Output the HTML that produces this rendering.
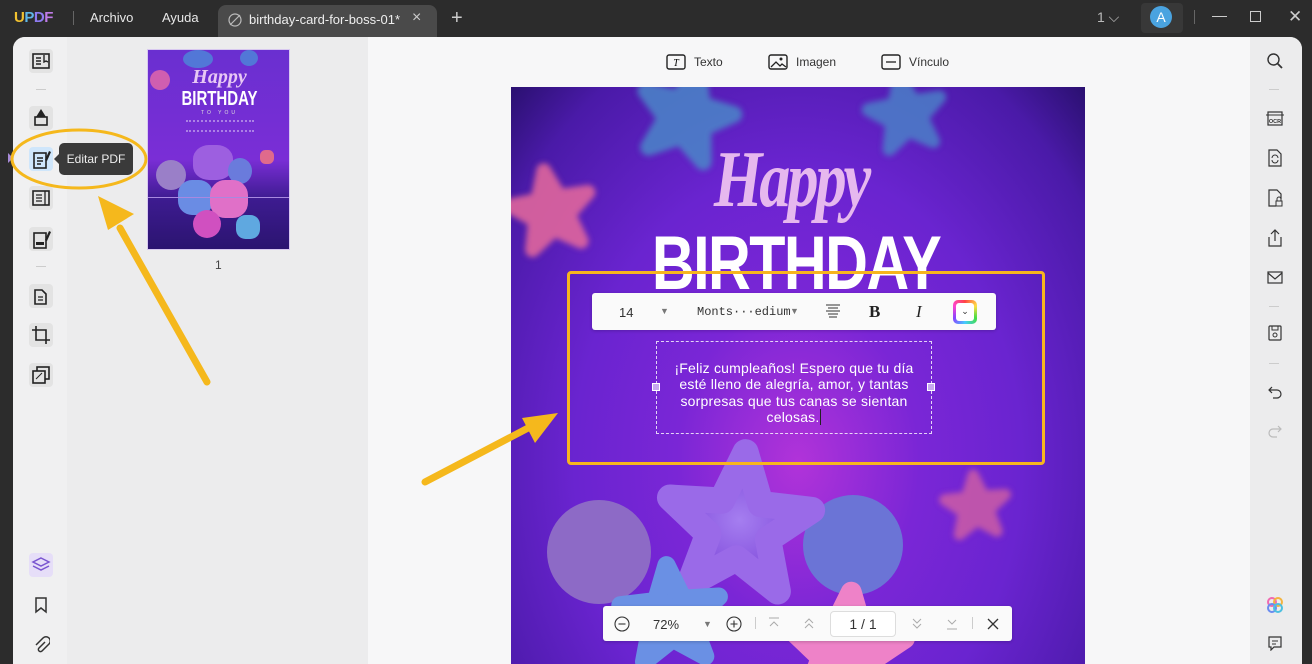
<!DOCTYPE html>
<html><head><meta charset="utf-8"><style>
*{margin:0;padding:0;box-sizing:border-box}
body{width:1312px;height:664px;overflow:hidden;background:#2c2c2c;font-family:"Liberation Sans",sans-serif;position:relative}
.a{position:absolute}
svg{display:block}
</style></head><body>
<!-- top bar -->
<div class="a" style="left:14px;top:9px;font-weight:bold;font-size:15px;letter-spacing:-0.5px"><span style="color:#f2c230">U</span><span style="color:#5fb7e8">P</span><span style="color:#8e7bf0">D</span><span style="color:#c07be8">F</span></div>
<div class="a" style="left:73px;top:11px;width:1px;height:14px;background:#666"></div>
<div class="a" style="left:90px;top:10px;color:#e8e8e8;font-size:13px">Archivo</div>
<div class="a" style="left:162px;top:10px;color:#e8e8e8;font-size:13px">Ayuda</div>
<div class="a" style="left:218px;top:5px;width:219px;height:33px;background:#4a4a4a;border-radius:8px 8px 0 0"></div>
<svg class="a" style="left:228px;top:13px" width="14" height="14"><circle cx="7" cy="7" r="6" fill="none" stroke="#bbb" stroke-width="1.2"/><line x1="2" y1="12" x2="12" y2="2" stroke="#bbb" stroke-width="1.2"/></svg>
<div class="a" style="left:249px;top:12px;color:#eee;font-size:13px">birthday-card-for-boss-01*</div>
<div class="a" style="left:412px;top:9px;color:#ccc;font-size:16px">×</div>
<div class="a" style="left:451px;top:7px;color:#ccc;font-size:20px">+</div>
<div class="a" style="left:1097px;top:9px;color:#bbb;font-size:14px">1 ⌵</div>
<div class="a" style="left:1141px;top:3px;width:42px;height:30px;background:#383838;border-radius:4px"></div>
<div class="a" style="left:1150px;top:6px;width:22px;height:22px;border-radius:50%;background:#4aa3e0;color:#fff;font-size:14px;text-align:center;line-height:22px">A</div>
<div class="a" style="left:1194px;top:10px;width:1px;height:14px;background:#666"></div>
<div class="a" style="left:1212px;top:16px;width:15px;height:1px;background:#ccc"></div>
<div class="a" style="left:1250px;top:11px;width:11px;height:11px;border:1px solid #ccc"></div>
<div class="a" style="left:1288px;top:7px;color:#ccc;font-size:17px">✕</div>

<!-- main panel -->
<div class="a" style="left:13px;top:37px;width:1289px;height:627px;background:#f7f7f8;border-radius:12px 12px 0 0;overflow:hidden">
 <div class="a" style="left:0;top:0;width:54px;height:627px;background:#f0f0f1"></div>
 <div class="a" style="left:54px;top:0;width:301px;height:627px;background:#ececed"></div>
 <div class="a" style="right:0;top:0;width:52px;height:627px;background:#ececed"></div>
</div>
<!-- left icons -->
<div class="a" style="left:29px;top:49px;width:24px;height:24px;background:#e3e3e3;border-radius:4px"></div>
<svg class="a" style="left:31px;top:51px" width="20" height="20"><rect x="2" y="3" width="16" height="14" fill="none" stroke="#222" stroke-width="1.6"/><path d="M5 7h5M5 10h5M5 13h5M13 4v7l2-1 2 1" stroke="#222" stroke-width="1.4" fill="none"/></svg>
<div class="a" style="left:36px;top:89px;width:10px;height:1px;background:#ccc"></div>
<div class="a" style="left:29px;top:106px;width:24px;height:24px;background:#e3e3e3;border-radius:4px"></div>
<svg class="a" style="left:31px;top:108px" width="20" height="22"><path d="M10 1L15 9H5Z" fill="#222"/><rect x="4" y="9" width="12" height="8" fill="none" stroke="#222" stroke-width="1.6"/></svg>
<div class="a" style="left:29px;top:147px;width:24px;height:24px;background:#cfe6fb;border-radius:4px"></div>
<svg class="a" style="left:31px;top:149px" width="22" height="22"><rect x="3" y="4" width="12" height="15" fill="none" stroke="#222" stroke-width="1.6"/><path d="M6 9h6M6 12h6M6 15h4" stroke="#222" stroke-width="1.4"/><path d="M18 2l2 1-4 9-2-1z" fill="#222"/></svg>
<div class="a" style="left:8px;top:153px;width:0;height:0;border-top:5px solid transparent;border-bottom:5px solid transparent;border-left:5px solid #a78ad8"></div>
<div class="a" style="left:59px;top:143px;width:74px;height:32px;background:#3a3a3a;border-radius:5px;color:#eee;font-size:12px;line-height:32px;text-align:center">Editar PDF</div>
<div class="a" style="left:54px;top:154px;border-top:5px solid transparent;border-bottom:5px solid transparent;border-right:5px solid #3a3a3a"></div>
<div class="a" style="left:29px;top:186px;width:24px;height:24px;background:#e3e3e3;border-radius:4px"></div>
<svg class="a" style="left:31px;top:188px" width="20" height="20"><rect x="2" y="3" width="16" height="14" fill="none" stroke="#222" stroke-width="1.6"/><path d="M5 7h6M5 10h6M5 13h6M14 3v14" stroke="#222" stroke-width="1.3"/></svg>
<div class="a" style="left:29px;top:227px;width:24px;height:24px;background:#e3e3e3;border-radius:4px"></div>
<svg class="a" style="left:31px;top:229px" width="22" height="22"><rect x="3" y="4" width="12" height="15" fill="none" stroke="#222" stroke-width="1.6"/><rect x="5" y="13" width="8" height="3" fill="#222"/><path d="M18 2l2 1-4 9-2-1z" fill="#222"/></svg>
<div class="a" style="left:36px;top:266px;width:10px;height:1px;background:#ccc"></div>
<div class="a" style="left:29px;top:284px;width:24px;height:24px;background:#e3e3e3;border-radius:4px"></div>
<svg class="a" style="left:31px;top:286px" width="20" height="20"><path d="M4 4h7l4 4v10H4z" fill="none" stroke="#222" stroke-width="1.6"/><path d="M7 11h5M7 14h5" stroke="#222" stroke-width="1.3"/></svg>
<div class="a" style="left:29px;top:323px;width:24px;height:24px;background:#e3e3e3;border-radius:4px"></div>
<svg class="a" style="left:31px;top:325px" width="20" height="20"><path d="M5 1v14h14M1 5h14v14" fill="none" stroke="#222" stroke-width="1.6"/></svg>
<div class="a" style="left:29px;top:363px;width:24px;height:24px;background:#e3e3e3;border-radius:4px"></div>
<svg class="a" style="left:31px;top:365px" width="20" height="20"><rect x="6" y="2" width="12" height="12" fill="none" stroke="#222" stroke-width="1.6"/><rect x="2" y="6" width="12" height="12" fill="#e3e3e3" stroke="#222" stroke-width="1.6"/><path d="M5 14l6-6" stroke="#222"/></svg>
<div class="a" style="left:29px;top:553px;width:24px;height:24px;background:#e6def8;border-radius:4px"></div>
<svg class="a" style="left:31px;top:555px" width="20" height="20"><path d="M10 3l8 4-8 4-8-4z M2 11l8 4 8-4" fill="none" stroke="#7a55d0" stroke-width="1.5"/></svg>
<svg class="a" style="left:33px;top:596px" width="16" height="18"><path d="M3 2h10v14l-5-4-5 4z" fill="none" stroke="#333" stroke-width="1.5"/></svg>
<svg class="a" style="left:32px;top:635px" width="18" height="20"><path d="M13 7l-6 6a2 2 0 0 0 3 3l7-7a4 4 0 0 0-6-6l-7 7" fill="none" stroke="#333" stroke-width="1.5"/></svg>

<!-- thumbnail -->
<div class="a" style="left:147px;top:49px;width:143px;height:201px;overflow:hidden;border:1px solid #d8c8f0;background:linear-gradient(180deg,#6a2fd0 0%,#7a2ed6 55%,#3d1b90 75%,#2b1470 100%)">
 <div class="a" style="left:2px;top:20px;width:20px;height:20px;background:#e86aa8;border-radius:50%;opacity:.8"></div>
 <div class="a" style="left:35px;top:0;width:30px;height:18px;background:#4c8ad8;border-radius:50%;opacity:.8"></div>
 <div class="a" style="left:92px;top:0;width:18px;height:16px;background:#4c8ad8;border-radius:50%;opacity:.8"></div>
 <div class="a" style="left:0;top:16px;width:143px;text-align:center;color:#e8c8f4;font-style:italic;font-weight:bold;font-size:20px;font-family:'Liberation Serif',serif">Happy</div>
 <div class="a" style="left:0;top:38px;width:143px;text-align:center;color:#fff;font-weight:bold;font-size:20px;transform:scaleX(.75)">BIRTHDAY</div>
 <div class="a" style="left:0;top:60px;width:143px;text-align:center;color:#ddd;font-size:5px;letter-spacing:3px">TO YOU</div>
 <div class="a" style="left:38px;top:70px;width:68px;height:12px;border-top:2px dotted rgba(255,255,255,.4);border-bottom:2px dotted rgba(255,255,255,.4)"></div>
 <div class="a" style="left:8px;top:110px;width:30px;height:30px;border-radius:50%;background:#9a7fc8"></div>
 <div class="a" style="left:45px;top:95px;width:40px;height:35px;border-radius:40%;background:#9d5fe0"></div>
 <div class="a" style="left:80px;top:108px;width:24px;height:26px;border-radius:50%;background:#6a7bdc"></div>
 <div class="a" style="left:30px;top:130px;width:35px;height:35px;border-radius:40%;background:#6a8ce4"></div>
 <div class="a" style="left:62px;top:130px;width:38px;height:38px;border-radius:40%;background:#e070c8"></div>
 <div class="a" style="left:45px;top:160px;width:28px;height:28px;border-radius:50%;background:#d050c0"></div>
 <div class="a" style="left:88px;top:165px;width:24px;height:24px;border-radius:40%;background:#5fa8e0"></div>
 <div class="a" style="left:112px;top:100px;width:14px;height:14px;border-radius:40%;background:#e06a8c"></div>
 <div class="a" style="left:0;top:147px;width:143px;height:1px;background:#a888e0"></div>
</div>
<div class="a" style="left:215px;top:258px;font-size:12px;color:#444">1</div>

<!-- top tool row -->
<svg class="a" style="left:666px;top:53px" width="20" height="18"><rect x="1" y="2" width="18" height="14" rx="2" fill="none" stroke="#222" stroke-width="1.4"/><text x="10" y="13" font-size="10" font-style="italic" text-anchor="middle" font-family="Liberation Serif">T</text></svg>
<div class="a" style="left:694px;top:55px;font-size:12px;color:#333">Texto</div>
<svg class="a" style="left:768px;top:53px" width="20" height="18"><rect x="1" y="2" width="18" height="14" rx="2" fill="none" stroke="#222" stroke-width="1.4"/><path d="M3 14l5-5 4 4 2-2 4 3" fill="none" stroke="#222" stroke-width="1.3"/><circle cx="13" cy="6" r="1.5" fill="#222"/></svg>
<div class="a" style="left:796px;top:55px;font-size:12px;color:#333">Imagen</div>
<svg class="a" style="left:881px;top:53px" width="20" height="18"><rect x="1" y="2" width="18" height="14" rx="2" fill="none" stroke="#222" stroke-width="1.4"/><path d="M5 9h10" stroke="#222" stroke-width="1.3"/></svg>
<div class="a" style="left:909px;top:55px;font-size:12px;color:#333">Vínculo</div>

<!-- page -->
<div class="a" style="left:511px;top:87px;width:574px;height:577px;overflow:hidden;background:radial-gradient(ellipse at 50% 65%,#b133d9 0%,#7a26d6 30%,#6a24d0 55%,#4a1aa8 85%,#2a1070 100%)">
<svg width="574" height="577">
<defs><polygon id="s" points="0,-1 0.26,-0.33 0.95,-0.31 0.4,0.13 0.59,0.81 0,0.42 -0.59,0.81 -0.4,0.13 -0.95,-0.31 -0.26,-0.33" stroke-linejoin="round" stroke-width="0.35"/>
<radialGradient id="pk"><stop offset="0" stop-color="#f8b0d0"/><stop offset="1" stop-color="#e0507e"/></radialGradient>
<radialGradient id="bl"><stop offset="0" stop-color="#6ab0e0"/><stop offset="1" stop-color="#3a6cb8"/></radialGradient>
<radialGradient id="pu"><stop offset="0" stop-color="#a57ef0"/><stop offset="1" stop-color="#7c44d8"/></radialGradient>
<filter id="bf"><feGaussianBlur stdDeviation="3"/></filter>
</defs>
<g filter="url(#bf)">
<use href="#s" fill="#4a86c8" stroke="#4a86c8" transform="translate(175,30) scale(48) rotate(15)" opacity=".85"/>
<use href="#s" fill="#4a86c8" stroke="#4a86c8" transform="translate(395,28) scale(38) rotate(-10)" opacity=".8"/>
<use href="#s" fill="#e86a9c" stroke="#e86a9c" transform="translate(40,125) scale(42) rotate(-10)" opacity=".85"/>
<use href="#s" fill="#e06a9c" stroke="#e06a9c" transform="translate(465,420) scale(32) rotate(-5)" opacity=".7"/>
</g>
<circle cx="88" cy="465" r="52" fill="#8d6ac6"/>
<circle cx="342" cy="458" r="50" fill="#6b74d6"/>
<use href="#s" fill="url(#pu)" stroke="#9a6ae8" transform="translate(228,440) scale(75) rotate(5)"/>
<use href="#s" fill="#6a90e4" stroke="#6a90e4" transform="translate(160,530) scale(52) rotate(-5)"/>
<use href="#s" fill="#ee82c8" stroke="#ee82c8" transform="translate(335,565) scale(60) rotate(5)"/>
</svg>
<div class="a" style="left:130px;top:48px;width:300px;text-align:center;color:#e6b8ee;font-family:'Liberation Serif',serif;font-style:italic;font-weight:bold;font-size:80px;line-height:90px;letter-spacing:-4px;transform:scaleX(.78)">Happy</div>
<div class="a" style="left:90px;top:142px;width:390px;text-align:center;color:#fff;font-weight:bold;font-size:76px;line-height:70px;letter-spacing:-2px;transform:scaleX(.78)">BIRTHDAY</div>
</div>

<!-- orange selection -->
<div class="a" style="left:567px;top:271px;width:478px;height:194px;border:3px solid #f7b51e;border-radius:4px"></div>
<!-- text toolbar -->
<div class="a" style="left:592px;top:293px;width:404px;height:37px;background:#fafafa;border-radius:3px;box-shadow:0 1px 3px rgba(0,0,0,.2)"></div>
<div class="a" style="left:619px;top:305px;font-size:13px;color:#333">14</div>
<div class="a" style="left:660px;top:306px;font-size:9px;color:#777">▼</div>
<div class="a" style="left:697px;top:305px;font-size:12px;color:#333;font-family:'Liberation Mono',monospace">Monts···edium</div>
<div class="a" style="left:790px;top:306px;font-size:9px;color:#777">▼</div>
<svg class="a" style="left:825px;top:303px" width="16" height="16"><path d="M1 2h14M3 5h10M1 8h14M3 11h10M4 14h8" stroke="#333" stroke-width="1.1"/></svg>
<div class="a" style="left:869px;top:302px;font-size:17px;font-weight:bold;font-family:'Liberation Serif',serif;color:#222">B</div>
<div class="a" style="left:916px;top:302px;font-size:17px;font-style:italic;font-family:'Liberation Serif',serif;color:#222">I</div>
<div class="a" style="left:953px;top:300px;width:24px;height:24px;border-radius:5px;background:conic-gradient(#f44,#fd4,#4d4,#4cf,#84f,#f4c,#f44);padding:3px"><div style="width:18px;height:18px;background:#fff;border-radius:3px;font-size:9px;text-align:center;line-height:16px;color:#333">⌄</div></div>
<!-- text box -->
<div class="a" style="left:656px;top:341px;width:276px;height:93px;border:1px dashed rgba(255,255,255,.8)"></div>
<div class="a" style="left:652px;top:383px;width:8px;height:8px;background:#c8a8f0;border:1px solid #fff"></div>
<div class="a" style="left:927px;top:383px;width:8px;height:8px;background:#c8a8f0;border:1px solid #fff"></div>
<div class="a" style="left:656px;top:360px;width:276px;text-align:center;color:#fff;font-size:14px;line-height:16.4px;white-space:nowrap;letter-spacing:0.2px">¡Feliz cumpleaños! Espero que tu día<br>esté lleno de alegría, amor, y tantas<br>sorpresas que tus canas se sientan<br>celosas.<span style="border-left:1px solid #222;margin-left:1px"></span></div>

<!-- zoom bar -->
<div class="a" style="left:603px;top:606px;width:409px;height:35px;background:#fafafa;border-radius:3px;box-shadow:0 1px 3px rgba(0,0,0,.2)"></div>
<svg class="a" style="left:614px;top:616px" width="16" height="16"><circle cx="8" cy="8" r="7" fill="none" stroke="#333" stroke-width="1.1"/><path d="M4.5 8h7" stroke="#333" stroke-width="1.1"/></svg>
<div class="a" style="left:653px;top:617px;font-size:13px;color:#333">72%</div>
<div class="a" style="left:703px;top:619px;font-size:9px;color:#777">▼</div>
<svg class="a" style="left:726px;top:616px" width="16" height="16"><circle cx="8" cy="8" r="7" fill="none" stroke="#333" stroke-width="1.1"/><path d="M4.5 8h7M8 4.5v7" stroke="#333" stroke-width="1.1"/></svg>
<div class="a" style="left:755px;top:617px;width:1px;height:12px;background:#ccc"></div>
<svg class="a" style="left:767px;top:616px" width="14" height="14"><path d="M2 2h10M3 10l4-4 4 4" fill="none" stroke="#aaa"/></svg>
<svg class="a" style="left:802px;top:616px" width="14" height="14"><path d="M3 7l4-4 4 4M3 12l4-4 4 4" fill="none" stroke="#aaa"/></svg>
<div class="a" style="left:830px;top:611px;width:66px;height:26px;border:1px solid #ddd;border-radius:4px;background:#fff;font-size:14px;color:#333;text-align:center;line-height:24px">1 / 1</div>
<svg class="a" style="left:910px;top:617px" width="14" height="14"><path d="M3 2l4 4 4-4M3 7l4 4 4-4" fill="none" stroke="#aaa"/></svg>
<svg class="a" style="left:945px;top:617px" width="14" height="14"><path d="M3 3l4 4 4-4M2 12h10" fill="none" stroke="#aaa"/></svg>
<div class="a" style="left:972px;top:617px;width:1px;height:12px;background:#ccc"></div>
<svg class="a" style="left:986px;top:617px" width="14" height="14"><path d="M2 2l10 10M12 2L2 12" stroke="#333" stroke-width="1.3"/></svg>

<!-- right sidebar icons -->
<svg class="a" style="left:1266px;top:52px" width="18" height="18"><circle cx="7.5" cy="7.5" r="5.5" fill="none" stroke="#333" stroke-width="1.4"/><path d="M11.5 11.5l4.5 4.5" stroke="#333" stroke-width="1.8"/></svg>
<div class="a" style="left:1269px;top:89px;width:10px;height:1px;background:#ccc"></div>
<svg class="a" style="left:1266px;top:109px" width="18" height="18"><rect x="2" y="3" width="14" height="13" fill="none" stroke="#333" stroke-width="1.2"/><path d="M0 6h18" stroke="#333"/><text x="9" y="14" font-size="5.5" text-anchor="middle" font-family="Liberation Sans" font-weight="bold" fill="#333">OCR</text></svg>
<svg class="a" style="left:1266px;top:148px" width="18" height="20"><path d="M3 2h8l4 4v12H3z" fill="none" stroke="#333" stroke-width="1.2"/><path d="M6 10a3 3 0 0 1 6 0M12 12a3 3 0 0 1-6 0" fill="none" stroke="#333"/></svg>
<svg class="a" style="left:1266px;top:188px" width="18" height="20"><path d="M10 18H3V2h8l4 4v5" fill="none" stroke="#333" stroke-width="1.2"/><rect x="10" y="13" width="6" height="5" fill="none" stroke="#333"/><path d="M11 13v-2a2 2 0 0 1 4 0v2" fill="none" stroke="#333"/></svg>
<svg class="a" style="left:1266px;top:228px" width="18" height="20"><path d="M3 9v9h12V9M9 13V2M5 6l4-4 4 4" fill="none" stroke="#333" stroke-width="1.2"/></svg>
<svg class="a" style="left:1266px;top:268px" width="18" height="18"><rect x="2" y="4" width="14" height="11" fill="none" stroke="#333" stroke-width="1.2"/><path d="M2 5l7 6 7-6" fill="none" stroke="#333" stroke-width="1.2"/></svg>
<div class="a" style="left:1269px;top:306px;width:10px;height:1px;background:#ccc"></div>
<svg class="a" style="left:1266px;top:324px" width="18" height="18"><rect x="3" y="2" width="12" height="14" rx="1" fill="none" stroke="#333" stroke-width="1.2"/><path d="M6 2v4h6V2" fill="none" stroke="#333"/><circle cx="9" cy="11" r="2" fill="none" stroke="#333"/></svg>
<div class="a" style="left:1269px;top:363px;width:10px;height:1px;background:#ccc"></div>
<svg class="a" style="left:1267px;top:384px" width="16" height="16"><path d="M5 3L2 6l3 3M2 6h8a4 4 0 0 1 0 8H6" fill="none" stroke="#333" stroke-width="1.2"/></svg>
<svg class="a" style="left:1267px;top:423px" width="16" height="16"><path d="M11 3l3 3-3 3M14 6H6a4 4 0 0 0 0 8h4" fill="none" stroke="#bbb" stroke-width="1.2"/></svg>
<svg class="a" style="left:1265px;top:595px" width="20" height="20"><g fill="none" stroke-width="2"><circle cx="7" cy="7" r="4" stroke="#f06ab0"/><circle cx="13" cy="7" r="4" stroke="#f4b440"/><circle cx="7" cy="13" r="4" stroke="#6a8cf0"/><circle cx="13" cy="13" r="4" stroke="#4cc0e0"/></g></svg>
<svg class="a" style="left:1267px;top:635px" width="16" height="16"><path d="M2 2h12v10H7l-3 3v-3H2z" fill="none" stroke="#333" stroke-width="1.2"/><path d="M5 6h6M5 9h4" stroke="#333"/></svg>

<!-- annotations -->
<svg class="a" style="left:0;top:0" width="1312" height="664">
<ellipse cx="79" cy="159" rx="67" ry="29" fill="none" stroke="#f5b81c" stroke-width="3"/>
<path d="M207 382L120 228" stroke="#f5b81c" stroke-width="7" stroke-linecap="round"/>
<polygon points="98,196 134,214 108,230" fill="#f5b81c"/>
<path d="M425 482L530 427" stroke="#f5b81c" stroke-width="7" stroke-linecap="round"/>
<polygon points="558,413 535,443 522,418" fill="#f5b81c"/>
</svg>
</body></html>
